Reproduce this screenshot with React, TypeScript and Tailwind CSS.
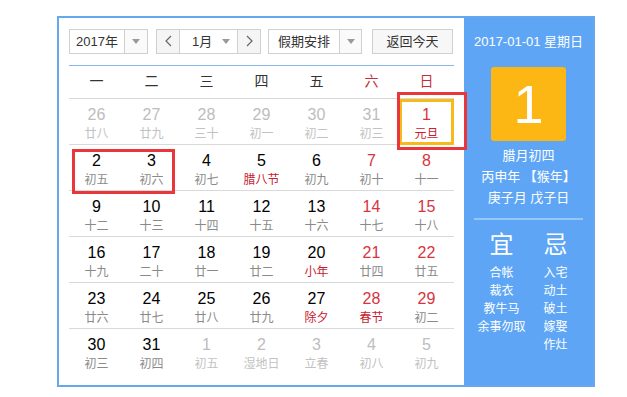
import React from 'react';

const FONT = '"Liberation Sans", Arial, "Noto Sans CJK SC", sans-serif';

interface Day {
  d: number;
  l: string;
  other?: boolean; // 不是本月
  fest?: boolean; // 节日，农历文字标红
  today?: boolean;
}

const weeks: Day[][] = [
  [
    { d: 26, l: '廿八', other: true },
    { d: 27, l: '廿九', other: true },
    { d: 28, l: '三十', other: true },
    { d: 29, l: '初一', other: true },
    { d: 30, l: '初二', other: true },
    { d: 31, l: '初三', other: true },
    { d: 1, l: '元旦', fest: true, today: true },
  ],
  [
    { d: 2, l: '初五' },
    { d: 3, l: '初六' },
    { d: 4, l: '初七' },
    { d: 5, l: '腊八节', fest: true },
    { d: 6, l: '初九' },
    { d: 7, l: '初十' },
    { d: 8, l: '十一' },
  ],
  [
    { d: 9, l: '十二' },
    { d: 10, l: '十三' },
    { d: 11, l: '十四' },
    { d: 12, l: '十五' },
    { d: 13, l: '十六' },
    { d: 14, l: '十七' },
    { d: 15, l: '十八' },
  ],
  [
    { d: 16, l: '十九' },
    { d: 17, l: '二十' },
    { d: 18, l: '廿一' },
    { d: 19, l: '廿二' },
    { d: 20, l: '小年', fest: true },
    { d: 21, l: '廿四' },
    { d: 22, l: '廿五' },
  ],
  [
    { d: 23, l: '廿六' },
    { d: 24, l: '廿七' },
    { d: 25, l: '廿八' },
    { d: 26, l: '廿九' },
    { d: 27, l: '除夕', fest: true },
    { d: 28, l: '春节', fest: true },
    { d: 29, l: '初二' },
  ],
  [
    { d: 30, l: '初三' },
    { d: 31, l: '初四' },
    { d: 1, l: '初五', other: true },
    { d: 2, l: '湿地日', other: true },
    { d: 3, l: '立春', other: true },
    { d: 4, l: '初八', other: true },
    { d: 5, l: '初九', other: true },
  ],
];

const weekNames = ['一', '二', '三', '四', '五', '六', '日'];
const yi = ['合帐', '裁衣', '教牛马', '余事勿取'];
const ji = ['入宅', '动土', '破土', '嫁娶', '作灶'];

function Caret() {
  return (
    <svg width="8" height="5" viewBox="0 0 8 5">
      <path d="M0 0h8L4 5z" fill="#9a9a9a" />
    </svg>
  );
}

function Chevron({ dir }: { dir: 'l' | 'r' }) {
  return (
    <svg width="7" height="12" viewBox="0 0 7 12">
      <path
        d={dir === 'l' ? 'M6 1L1 6l5 5' : 'M1 1l5 5-5 5'}
        fill="none"
        stroke="#666"
        strokeWidth="1.2"
      />
    </svg>
  );
}

export default function App() {
  return (
    <div className="relative min-h-screen bg-white pl-[57px] pt-[16px]" style={{ fontFamily: FONT }}>
      <div className="flex w-[538px] h-[371px] border-2 border-[#66a8ee]">
        {/* 左侧日历 */}
        <div className="w-[405px] bg-white px-[10px] pt-[11px] pb-[10px] flex flex-col">
          <div className="flex h-[25px] text-[13px] text-[#333]">
            <div className="flex w-[79px] border border-[#d0d0d0]">
              <div className="w-[55px] flex items-center justify-center border-r border-[#d0d0d0]">2017年</div>
              <div className="flex-1 flex items-center justify-center bg-[#fafafa]"><Caret /></div>
            </div>
            <div className="ml-[8px] flex w-[105px] border border-[#d0d0d0]">
              <div className="w-[23px] flex items-center justify-center bg-[#f5f5f5] border-r border-[#d0d0d0]"><Chevron dir="l" /></div>
              <div className="flex-1 flex items-center justify-between pl-[12px] pr-[7px] border-r border-[#d0d0d0]">
                <span>1月</span>
                <Caret />
              </div>
              <div className="w-[22px] flex items-center justify-center bg-[#f5f5f5]"><Chevron dir="r" /></div>
            </div>
            <div className="ml-[7px] flex w-[94px] border border-[#d0d0d0]">
              <div className="w-[71px] flex items-center justify-center border-r border-[#d0d0d0]">假期安排</div>
              <div className="flex-1 flex items-center justify-center bg-[#fafafa]"><Caret /></div>
            </div>
            <div className="ml-[10px] w-[81px] flex items-center justify-center border border-[#d0d0d0] bg-[#f7f7f7]">返回今天</div>
          </div>

          <div className="mt-[11px] h-px bg-[#86b9ea]" />

          <div className="grid grid-cols-7 h-[34px] border-b border-[#d9d9d9] text-[14px]">
            {weekNames.map((w, i) => (
              <div key={w} className={`flex items-center justify-center ${i >= 5 ? 'text-[#c4303a]' : 'text-[#333]'}`}>
                {w}
              </div>
            ))}
          </div>

          {weeks.map((row, ri) => (
            <div key={ri} className={`grid grid-cols-7 h-[46px] ${ri < weeks.length - 1 ? 'border-b border-[#d9d9d9]' : ''}`}>
              {row.map((day, ci) => {
                const numColor = day.other
                  ? 'text-[#bdbdbd]'
                  : ci >= 5 || day.today
                  ? 'text-[#d8333e]'
                  : 'text-black';
                const lunarColor = day.other
                  ? 'text-[#c2c2c2]'
                  : day.fest
                  ? 'text-[#c8202d]'
                  : 'text-[#8a8a8a]';
                return (
                  <div
                    key={ci}
                    className={`flex flex-col items-center pt-[3px] border-[3px] ${day.today ? 'border-[#f6bb1a]' : 'border-transparent'}`}
                  >
                    <span className={`text-[16px] leading-[20px] ${numColor}`}>{day.d}</span>
                    <span className={`mt-px text-[12px] leading-[16px] ${lunarColor}`}>{day.l}</span>
                  </div>
                );
              })}
            </div>
          ))}
        </div>

        {/* 右侧详情 */}
        <div className="flex-1 bg-[#5ea6f5] text-white flex flex-col items-center pt-[15px]">
          <div className="text-[13px] leading-[18px]">2017-01-01 星期日</div>
          <div className="mt-[16px] w-[75px] h-[74px] rounded-[3px] bg-[#fdb714] flex items-center justify-center text-[54px] leading-none">
            1
          </div>
          <div className="mt-[4px] text-[13px] leading-[21px] text-center">
            <div>腊月初四</div>
            <div>丙申年 【猴年】</div>
            <div>庚子月 戊子日</div>
          </div>
          <div className="mt-[10px] self-stretch mx-[10px] h-[2px] bg-[#98c6f8]" />
          <div className="mt-[10px] flex">
            <div className="w-[54px] flex flex-col items-center">
              <div className="text-[24px] leading-[30px]">宜</div>
              <div className="mt-[4px] text-[12px] leading-[18px] text-center">
                {yi.map((t) => (
                  <div key={t}>{t}</div>
                ))}
              </div>
            </div>
            <div className="w-[54px] flex flex-col items-center">
              <div className="text-[24px] leading-[30px]">忌</div>
              <div className="mt-[4px] text-[12px] leading-[18px] text-center">
                {ji.map((t) => (
                  <div key={t}>{t}</div>
                ))}
              </div>
            </div>
          </div>
        </div>
      </div>

      {/* 红色标注框 */}
      <div className="absolute left-[397px] top-[92px] w-[70px] h-[58px] border-[3px] border-[#e8363a]" />
      <div className="absolute left-[72px] top-[149px] w-[103px] h-[45px] border-[3px] border-[#e8363a]" />
    </div>
  );
}
